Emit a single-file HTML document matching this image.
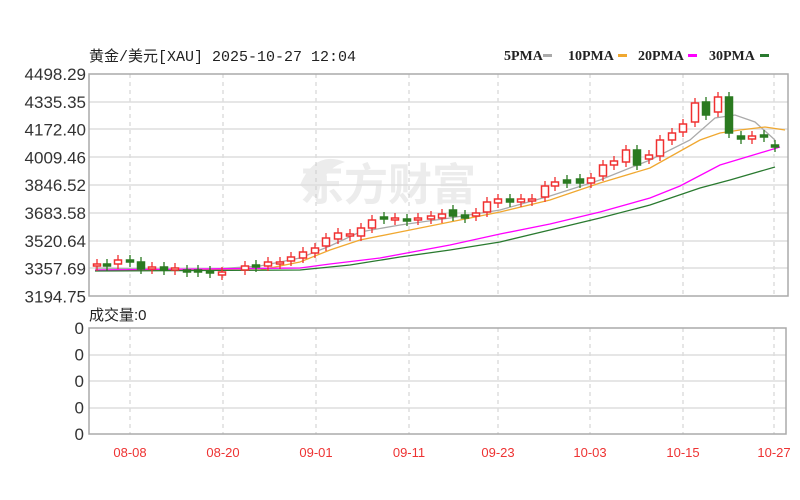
<!DOCTYPE html>
<html><head><meta charset="utf-8"><style>
body{margin:0;width:800px;height:500px;background:#fff;overflow:hidden;font-family:"Liberation Sans","Noto Sans CJK SC",sans-serif}
svg{position:absolute;left:0;top:0}
</style></head><body>
<svg width="800" height="500" xmlns="http://www.w3.org/2000/svg" id="s">
<text x="89" y="61" font-size="15" fill="#222" font-family="Liberation Mono,Noto Sans CJK SC,monospace">黄金/美元[XAU] 2025-10-27 12:04</text>
<g font-size="14" fill="#222" font-family="Liberation Serif,serif" font-weight="bold">
<text x="504" y="60">5PMA</text><rect x="543" y="54" width="9" height="3" fill="#aaa"/>
<text x="568" y="60">10PMA</text><rect x="618" y="54" width="9" height="3" fill="#f0a830"/>
<text x="638" y="60">20PMA</text><rect x="688" y="54" width="9" height="3" fill="#f0f"/>
<text x="709" y="60">30PMA</text><rect x="760" y="54" width="9" height="3" fill="#2a7a30"/>
</g>
<text x="300" y="200" font-size="44" fill="#ececec" font-family="Noto Sans CJK SC,sans-serif" font-weight="bold">东方财富</text>
<path d="M300 185 Q315 150 345 162 Q320 170 318 200 Z" fill="#ececec"/>
<g id="grid"></g>
<g id="cs"></g>
<g font-size="17" fill="#333" text-anchor="end" id="yl"></g>
<text x="89" y="320" font-size="15" fill="#222" font-family="Liberation Sans,Noto Sans CJK SC,sans-serif">成交量:0</text>
<g font-size="13" fill="#e33" text-anchor="middle" id="xl"></g>
</svg>
<script>
const NS="http://www.w3.org/2000/svg";
function el(p,t,a,txt){const e=document.createElementNS(NS,t);for(const k in a)e.setAttribute(k,a[k]);if(txt!==undefined)e.textContent=txt;document.getElementById(p).appendChild(e);}
const vx=[130,223,316,409,498,590,683,774];
const hy=[102,129,157,185,213,241,268];
for(const x of vx){el('grid','line',{x1:x,x2:x,y1:74,y2:296,stroke:'#ccc','stroke-dasharray':'4,4'});el('grid','line',{x1:x,x2:x,y1:328,y2:434,stroke:'#ccc','stroke-dasharray':'4,4'});}
for(const y of hy)el('grid','line',{x1:89,x2:788,y1:y,y2:y,stroke:'#ddd','stroke-width':1.5});
for(const y of [355,381,408])el('grid','line',{x1:89,x2:786,y1:y,y2:y,stroke:'#ddd','stroke-width':1.5});
el('grid','rect',{x:89,y:74,width:699,height:222,fill:'none',stroke:'#aaa','stroke-width':1.5});
el('grid','rect',{x:89,y:328,width:697,height:106,fill:'none',stroke:'#aaa','stroke-width':1.5});
const labs=['4498.29','4335.35','4172.40','4009.46','3846.52','3683.58','3520.64','3357.69','3194.75'];
labs.forEach((l,i)=>el('yl','text',{x:86,y:80+i*27.8},l));
for(let i=0;i<5;i++)el('yl','text',{x:84,y:334+i*26.5},'0');
['08-08','08-20','09-01','09-11','09-23','10-03','10-15','10-27'].forEach((l,i)=>el('xl','text',{x:vx[i],y:457},l));
const ma={'#aaa':[[95,268],[200,270],[260,266],[300,258],[330,246],[360,232],[400,225],[450,218],[500,210],[550,196],[600,180],[650,160],[690,140],[715,118],[735,115],[755,122],[775,140]],
'#f0a830':[[95,270],[260,270],[300,262],[330,250],[360,240],[400,232],[450,222],[500,212],[550,200],[600,183],[650,168],[700,140],[720,133],[740,130],[765,127],[785,130]],
'#f0f':[[95,270],[300,268],[330,264],[380,258],[450,245],[500,234],[550,224],[600,212],[650,198],[680,186],[720,165],[760,153],[780,147]],
'#2a7a30':[[95,271],[300,270],[350,265],[400,257],[450,250],[500,242],[550,230],[600,218],[650,205],[700,188],[730,180],[775,167]]};
for(const c in ma)el('cs','polyline',{points:ma[c].map(p=>p.join(',')).join(' '),fill:'none',stroke:c,'stroke-width':1.3});
const C=[[97,264,266,1],[107,264,266,0],[118,260,264,1],[130,260,262,0],[141,262,269,0],[152,267,269,1],[164,267,270,0],[175,268,270,1],[187,270,272,0],[198,270,272,0],[210,271,273,0],[222,272,275,1],[245,266,270,1],[256,265,267,0],[268,262,266,1],[280,262,264,1],[291,257,261,1],[303,252,258,1],[315,248,253,1],[326,238,246,1],[338,233,239,1],[350,234,236,1],[361,228,236,1],[372,220,228,1],[384,217,219,0],[395,218,220,1],[407,219,221,0],[418,218,220,1],[431,216,219,1],[442,214,218,1],[453,210,216,0],[465,215,218,0],[476,213,216,1],[487,202,212,1],[498,199,203,1],[510,199,202,0],[521,199,202,1],[532,199,201,1],[545,186,197,1],[555,182,186,1],[567,180,183,0],[580,179,183,0],[591,178,183,1],[603,165,176,1],[614,161,165,1],[626,150,162,1],[637,150,165,0],[649,155,159,1],[660,140,156,1],[672,133,140,1],[683,124,132,1],[695,103,122,1],[706,102,115,0],[718,97,112,1],[729,97,133,0],[741,136,139,0],[752,136,139,1],[764,135,137,0],[775,145,147,0]];
for(const [x,t,b,r] of C){const col=r?'#f03030':'#2a7a20';
el('cs','line',{x1:x,x2:x,y1:t-5,y2:b+5,stroke:col,'stroke-width':1.3});
el('cs','rect',{x:x-3.5,y:t,width:7,height:Math.max(b-t,1.5),fill:r?'#fff':col,stroke:col,'stroke-width':1.5});}
</script>
</body></html>
